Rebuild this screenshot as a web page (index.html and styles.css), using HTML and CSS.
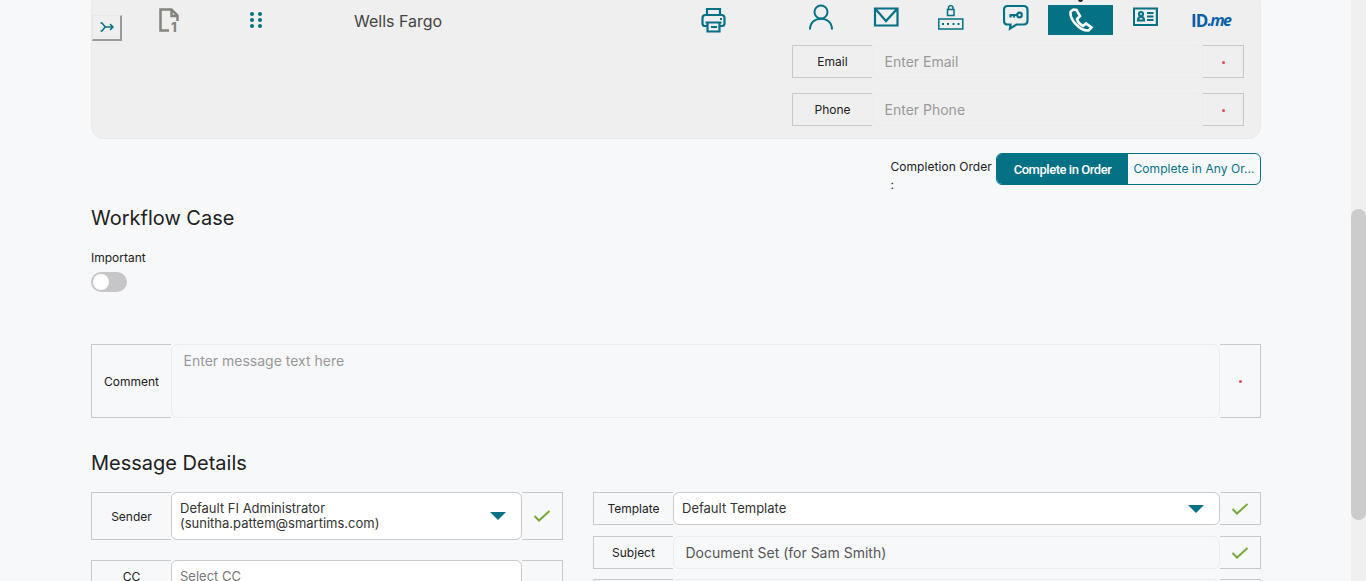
FILE: index.html
```html
<!DOCTYPE html>
<html lang="en">
<head>
    <meta charset="UTF-8">
    <meta name="viewport" content="width=device-width, initial-scale=1.0">
    <title>Workflow Case</title>
    <link rel="stylesheet" href="styles.css">
</head>
<body>
    <main class="page">
        <section class="recipient">
            <div class="recipient-row">
                <button class="merge-btn" type="button">
                    <svg width="14" height="10" viewBox="0 0 14 10"><path d="M.5 1H2l3.2 4L2 9H.5M5 5h8M10 2l3 3-3 3"/></svg>
                </button>
                <svg class="doc-icon" width="22" height="26" viewBox="0 0 22 26"><path d="M11 23.500H2.500V2.500h11l6 6V14M13.500 3v6H19"/><text x="13" y="25">1</text></svg>
                <svg class="drag-icon" width="14" height="18" viewBox="0 0 14 18"><circle cx="3" cy="3" r="2"/><circle cx="11" cy="3" r="2"/><circle cx="3" cy="9" r="2"/><circle cx="11" cy="9" r="2"/><circle cx="3" cy="15" r="2"/><circle cx="11" cy="15" r="2"/></svg>
                <span class="recipient-name">Wells Fargo</span>
                <svg class="icon print-icon" width="26" height="26" viewBox="0 0 26 26"><path d="M6 8V2h13v6M6 19H4q-2.500 0-2.500-2.500V11Q1.500 8 4.500 8h16q3 0 3 3v5.500Q23.500 19 21 19h-2M4.500 15.500h16M6.500 16v8.500h12V16M10 20h6M19 12h2"/></svg>
                <div class="auth-options">
                    <span class="auth"><svg class="icon thin" width="26" height="28" viewBox="0 0 26 28"><circle cx="13" cy="8" r="6.500"/><path d="M2 25.500c0-14.500 22-14.500 22 0"/></svg></span>
                    <span class="auth"><svg class="icon" width="26" height="28" viewBox="0 0 26 28"><path d="M2 4.500h22.500v17H2zM2.500 5L13 17 24 5"/></svg></span>
                    <span class="auth"><svg class="icon fine" width="26" height="28" viewBox="0 0 26 28"><path d="M9.500 5.500H16v6H9.500zM10.500 5.500V3q2.300-3 4.500 0v2.500M.8 15h24v10H.8z"/><path class="dots" d="M4 20h2M9 20h2M14.500 20h2M19.500 20h2"/></svg></span>
                    <span class="auth"><svg class="icon" width="26" height="28" viewBox="0 0 26 28"><path d="M4.500 2h16q4 0 4 4v10.500q0 4-4 4h-7L7 24.500l.5-4h-3q-3.500 0-3.500-4V6q0-4 3.500-4z"/><circle cx="16.500" cy="11" r="2.300"/><path d="M14.500 11h-8M7.500 10.500v3M11 10.500v3"/></svg></span>
                    <span class="auth selected"><svg width="26" height="28" viewBox="0 0 26 28"><path d="M5.500 3.500L2.700 5.500C1 13 12 25.500 20.500 24.500L23.500 21.500l-5.500-4-3 2.500c-3-1.500-5-3.800-6-7l3-3-3.500-6z"/></svg></span>
                    <span class="auth"><svg class="icon" width="26" height="28" viewBox="0 0 26 28"><path d="M.9 4.500h23v16.500H.9z"/><circle cx="8" cy="10" r="2"/><path d="M5 16.500c0-5 6-5 6 0zM14 9h6.500M14 12.500h6.500M14 16h6.500"/></svg></span>
                    <span class="auth idme">ID<i>.me</i></span>
                    <span class="arrow"></span>
                </div>
            </div>
            <div class="recipient-fields">
                <div class="field">
                    <label class="field-label" for="email">Email</label>
                    <input class="field-input" type="text" id="email" placeholder="Enter Email">
                    <span class="field-end"><span class="required"></span></span>
                </div>
                <div class="field">
                    <label class="field-label" for="phone">Phone</label>
                    <input class="field-input" type="text" id="phone" placeholder="Enter Phone">
                    <span class="field-end"><span class="required"></span></span>
                </div>
            </div>
        </section>

        <div class="order">
            <div class="order-label">Completion Order :</div>
            <div class="order-toggle">
                <button class="order-btn active" type="button">Complete in Order</button>
                <button class="order-btn" type="button">Complete in Any Or...</button>
            </div>
        </div>

        <h2 class="case-title">Workflow Case</h2>
        <div class="important">Important</div>
        <div class="switch"></div>

        <div class="field comment">
            <label class="field-label" for="comment">Comment</label>
            <textarea class="field-input" id="comment" placeholder="Enter message text here"></textarea>
            <span class="field-end"><span class="required"></span></span>
        </div>

        <h2 class="details-title">Message Details</h2>
        <div class="details">
            <div class="details-left">
                <div class="field sender">
                    <span class="field-label">Sender</span>
                    <div class="field-select"><span>Default FI Administrator<br>(sunitha.pattem@smartims.com)</span><span class="caret"></span></div>
                    <span class="field-end"><svg class="check" width="18" height="12" viewBox="0 0 18 12"><path d="M1.500 6L6 10.500 16.500 1"/></svg></span>
                </div>
                <div class="field">
                    <span class="field-label">CC</span>
                    <div class="field-select empty"><span>Select CC</span></div>
                    <span class="field-end"></span>
                </div>
            </div>
            <div class="details-right">
                <div class="field">
                    <span class="field-label">Template</span>
                    <div class="field-select"><span>Default Template</span><span class="caret"></span></div>
                    <span class="field-end"><svg class="check" width="18" height="12" viewBox="0 0 18 12"><path d="M1.500 6L6 10.500 16.500 1"/></svg></span>
                </div>
                <div class="field">
                    <label class="field-label" for="subject">Subject</label>
                    <input class="field-input" type="text" id="subject" value="Document Set (for Sam Smith)">
                    <span class="field-end"><svg class="check" width="18" height="12" viewBox="0 0 18 12"><path d="M1.500 6L6 10.500 16.500 1"/></svg></span>
                </div>
                <div class="field last">
                    <span class="field-label"></span>
                    <div class="field-input"></div>
                    <span class="field-end"></span>
                </div>
            </div>
        </div>
    </main>
    <div class="scrollbar"><div class="scroll-thumb"></div></div>
</body>
</html>
```

FILE: styles.css
```css
* {
    box-sizing: border-box;
}
body {
    margin: 0;
    height: 581px;
    overflow: hidden;
    display: flex;
    background-color: #f7f8fa;
    color: #212121;
    font-family: Inter, sans-serif;
    font-size: 13px;
}
.page {
    width: 1351px;
    height: 581px;
    overflow: hidden;
    padding: 0 90px 0 91px;
}
.recipient {
    height: 147px;
    margin-top: -8px;
    padding-top: 7px;
    background-color: #efefef;
    border: 1px solid #e8e9ea;
    border-radius: 13px;
}
.recipient-row {
    display: flex;
    align-items: flex-start;
    height: 45px;
}
.merge-btn {
    display: flex;
    align-items: center;
    justify-content: center;
    width: 30px;
    height: 26px;
    margin-top: 15px;
    padding: 0 0 2px;
    background-color: #efefef;
    border: 1px solid #e8e8e8;
    border-right: 2px solid #999;
    border-bottom: 2px solid #999;
}
.merge-btn svg {
    fill: none;
    stroke: #047185;
    stroke-width: 1.5;
}
.doc-icon {
    margin: 7px 0 0 36px;
    fill: none;
    stroke: #85857d;
    stroke-width: 2.5;
}
.doc-icon text {
    fill: #85857d;
    stroke: none;
    font-size: 13px;
    font-weight: 800;
}
.drag-icon {
    margin: 11px 0 0 69px;
    fill: #047185;
}
.recipient-name {
    width: 347px;
    margin: 11px 0 0 91px;
    font-size: 16px;
    line-height: 20px;
    color: #444;
}
.icon {
    fill: none;
    stroke: #047185;
    stroke-width: 2.2;
}
.icon.thin {
    stroke-width: 2;
}
.icon.fine {
    stroke-width: 1.5;
}
.icon .dots {
    stroke-width: 2;
}
.print-icon {
    margin-top: 7px;
}
.auth-options {
    position: relative;
    display: flex;
    margin: 5px 0 0 61px;
}
.auth {
    display: flex;
    justify-content: center;
    width: 65px;
    height: 30px;
}
.auth svg {
    margin-top: -1px;
}
.auth.selected {
    background-color: #047185;
}
.auth.selected svg {
    margin-top: 1px;
    fill: none;
    stroke: #fff;
    stroke-width: 2.6;
}
.auth.idme {
    font: bold 17px/31px "Open Sans", sans-serif;
    letter-spacing: -0.8px;
    color: #0860a8;
}
.idme i {
    font-size: 16px;
    letter-spacing: -1.8px;
}
.arrow {
    position: absolute;
    top: -6px;
    left: 290px;
    width: 5px;
    height: 3px;
    background-color: #212121;
    border-radius: 0 0 3px 3px;
}
.recipient-fields {
    display: flex;
    flex-direction: column;
    gap: 15px;
    width: 452px;
    margin: 0 16px 0 auto;
}
.field {
    display: flex;
    height: 33px;
}
.field-label {
    display: flex;
    align-items: center;
    justify-content: center;
    width: 80px;
    flex-shrink: 0;
    border: 1px solid #c8c9cb;
    border-right: none;
    font-size: 12px;
}
.field-input,
.field-select {
    flex: 1;
    min-width: 0;
    border: 1px solid #ebecee;
    border-radius: 6px;
    background-color: transparent;
}
.field-input {
    padding: 0 11px 0 11.5px;
    color: #555;
    font-family: Inter, sans-serif;
    font-size: 14px;
    outline: none;
    resize: none;
}
.field-input::placeholder {
    color: #999;
    opacity: 1;
}
.field-select {
    display: flex;
    align-items: center;
    justify-content: space-between;
    padding: 0 15px 0 8px;
    background-color: #fff;
    border-color: #c8c9cb;
    color: #333;
    line-height: 15px;
}
.field-select.empty {
    color: #777;
}
.field-end {
    display: flex;
    align-items: center;
    justify-content: center;
    width: 41px;
    flex-shrink: 0;
    border: 1px solid #c8c9cb;
    border-left: none;
}
.required {
    width: 3px;
    height: 3px;
    margin-top: 1px;
    border-radius: 50%;
    background-color: #e04b59;
}
.caret {
    border-top: 8px solid #047185;
    border-left: 8px solid transparent;
    border-right: 8px solid transparent;
}
.check {
    fill: none;
    stroke: #79a93b;
    stroke-width: 2;
}
.order {
    display: flex;
    justify-content: flex-end;
    margin-top: 14px;
}
.order-label {
    width: 105.5px;
    margin-top: 5px;
    font-size: 12px;
    letter-spacing: 0.05px;
    line-height: 18px;
}
.order-toggle {
    display: flex;
    width: 265px;
    height: 32px;
    border: 1px solid #047185;
    border-radius: 6px;
    overflow: hidden;
}
.order-btn {
    flex: 1;
    padding: 0 0 1px;
    border: none;
    background-color: transparent;
    color: #047185;
    font-family: Inter, sans-serif;
    font-size: 12px;
    letter-spacing: 0.05px;
    white-space: nowrap;
}
.order-btn.active {
    flex: 0 0 131px;
    padding: 0;
    background-color: #047185;
    color: #fff;
    font-family: Roboto, sans-serif;
    font-size: 13px;
    font-weight: 500;
    letter-spacing: -0.45px;
}
h2 {
    margin: 0;
    font-size: 20px;
    font-weight: 400;
    line-height: 24px;
}
.case-title {
    margin-top: 12px;
}
.important {
    margin-top: 20px;
    font-size: 12px;
    line-height: 16px;
}
.switch {
    width: 36px;
    height: 20px;
    margin-top: 6px;
    padding: 2px;
    border-radius: 10px;
    background-color: #c6c6c8;
}
.switch::before {
    content: "";
    display: block;
    width: 16px;
    height: 16px;
    border-radius: 50%;
    background-color: #fff;
}
.comment {
    height: 74px;
    margin-top: 52px;
}
.comment .field-input {
    padding-top: 7px;
}
.details-title {
    margin-top: 33px;
}
.details {
    display: flex;
    gap: 30px;
    margin-top: 17px;
}
.details-left {
    display: flex;
    flex-direction: column;
    gap: 20px;
    width: 472px;
}
.details-right {
    display: flex;
    flex-direction: column;
    gap: 11px;
    flex: 1;
}
.details-right .last {
    margin-top: -1px;
}
.sender {
    height: 48px;
}
.scrollbar {
    width: 15px;
    padding-top: 209px;
    background-color: #f0f0f0;
}
.scroll-thumb {
    height: 311px;
    border-radius: 8px;
    background-color: #ccc;
}
```
